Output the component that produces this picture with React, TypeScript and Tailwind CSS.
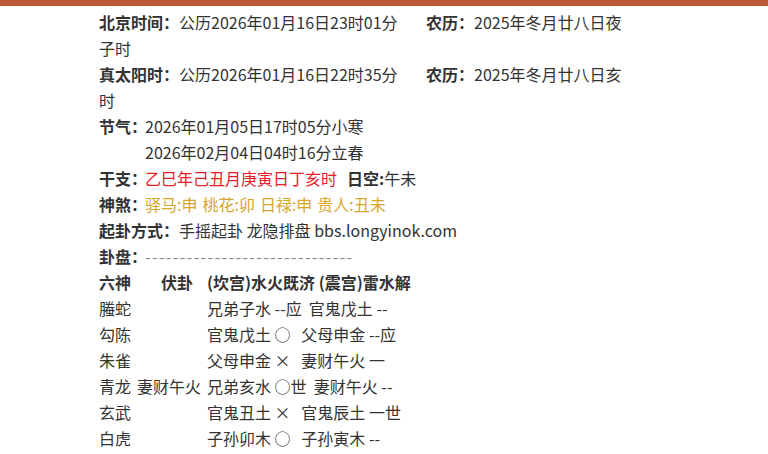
import React from "react";

const rows: [string, string, string][] = [
  ["螣蛇", "", "兄弟子水 --应  官鬼戊土 --"],
  ["勾陈", "", "官鬼戊土 ○   父母申金 --应"],
  ["朱雀", "", "父母申金 ×   妻财午火 一"],
  ["青龙", "妻财午火", "兄弟亥水 ○世  妻财午火 --"],
  ["玄武", "", "官鬼丑土 ×   官鬼辰土 一世"],
  ["白虎", "", "子孙卯木 ○   子孙寅木 --"],
  ["世位", "", ""],
];

function Label({ children }: { children: React.ReactNode }) {
  return <b className="w-[46px] shrink-0 whitespace-nowrap">{children}</b>;
}

export default function App() {
  return (
    <div
      className="h-[454px] overflow-hidden bg-white text-[#333] text-[16px] leading-[26px]"
      style={{ fontFamily: '"Noto Sans CJK SC", "Noto Sans", sans-serif' }}
    >
      <div className="h-[6px] bg-[#bb5636]" />
      <div className="pl-[99px] pt-[3px]">
        <div className="flex">
          <div className="w-[327px] shrink-0">
            <b>北京时间：</b>公历2026年01月16日23时01分
          </div>
          <div>
            <b>农历：</b>2025年冬月廿八日夜
          </div>
        </div>
        <div>子时</div>
        <div className="flex">
          <div className="w-[327px] shrink-0">
            <b>真太阳时：</b>公历2026年01月16日22时35分
          </div>
          <div>
            <b>农历：</b>2025年冬月廿八日亥
          </div>
        </div>
        <div>时</div>
        <div className="flex">
          <Label>节气：</Label>
          <div>
            <div>2026年01月05日17时05分小寒</div>
            <div>2026年02月04日04时16分立春</div>
          </div>
        </div>
        <div className="flex whitespace-nowrap">
          <Label>干支：</Label>
          <span className="text-[#e8202a]">乙巳年己丑月庚寅日丁亥时</span>
          <b className="ml-[10px]">日空:</b>
          <span>午未</span>
        </div>
        <div className="flex whitespace-nowrap">
          <Label>神煞：</Label>
          <span className="flex gap-[5px] text-[#d6a62a]">
            <span>驿马:申</span>
            <span>桃花:卯</span>
            <span>日禄:申</span>
            <span>贵人:丑未</span>
          </span>
        </div>
        <div className="whitespace-nowrap">
          <b>起卦方式：</b>手摇起卦 龙隐排盘 bbs.longyinok.com
        </div>
        <div className="flex">
          <Label>卦盘：</Label>
          <span className="text-[#888] tracking-[1.4px]">------------------------------</span>
        </div>
        <div className="flex font-bold">
          <span className="w-[62px]">六神</span>
          <span className="w-[46px]">伏卦</span>
          <span>(坎宫)水火既济 (震宫)雷水解</span>
        </div>
        {rows.map(([a, b, c]) => (
          <div key={a} className="flex">
            <span className="w-[38px] shrink-0">{a}</span>
            <span className="w-[70px] shrink-0">{b}</span>
            <span className="whitespace-pre">{c}</span>
          </div>
        ))}
      </div>
    </div>
  );
}
